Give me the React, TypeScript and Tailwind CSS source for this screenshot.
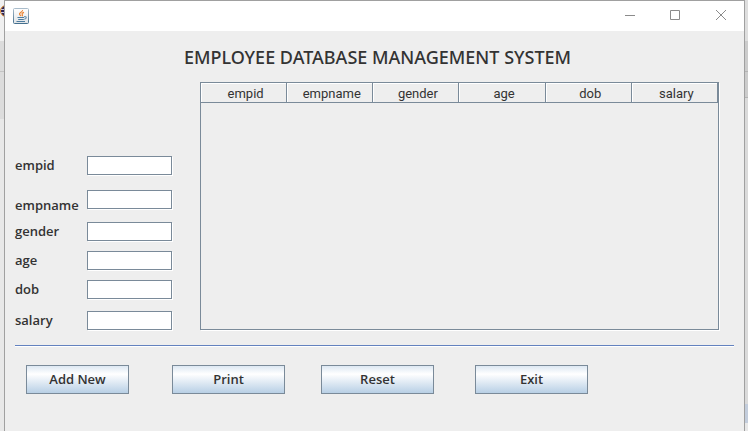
import React from "react";

const fields = [
  { name: "empid", row: "h-[34px]", label: "" },
  { name: "empname", row: "h-8", label: "pt-1.5" },
  { name: "gender", row: "h-[29px]", label: "" },
  { name: "age", row: "h-[29px]", label: "" },
  { name: "dob", row: "h-[31px]", label: "" },
  { name: "salary", row: "h-5", label: "" },
];

const columns = ["empid", "empname", "gender", "age", "dob", "salary"];

function JavaIcon() {
  return (
    <svg width="16" height="16" viewBox="0 0 16 16" aria-hidden="true">
      <defs>
        <linearGradient id="frame" x1="0" y1="0" x2="0" y2="1">
          <stop offset="0" stopColor="#a9bccb" />
          <stop offset="1" stopColor="#45708f" />
        </linearGradient>
        <linearGradient id="face" x1="0" y1="0" x2="0" y2="1">
          <stop offset="0" stopColor="#ffffff" />
          <stop offset="1" stopColor="#dfe3e6" />
        </linearGradient>
      </defs>
      <rect x="0.5" y="0.5" width="15" height="15" rx="1" fill="url(#face)" stroke="url(#frame)" />
      <path
        d="M9.6 2C10 3.8 6.2 4.4 6.5 6C6.7 7 7.6 7.2 7.8 8.2M11 4.4C9.2 5 8.6 5.6 9.3 6.5C9.8 7.2 9.4 7.8 8.9 8.2"
        fill="none"
        stroke="#ea8331"
        strokeWidth="1.2"
      />
      <path d="M4.5 9.5H11M5.2 11.5H10.8M3.5 13.5H12" fill="none" stroke="#4d7c9f" />
      <path d="M11 8.7C14.2 8 13.8 10.8 11.2 11.2" fill="none" stroke="#6a93b1" strokeWidth="1.1" />
    </svg>
  );
}

function TitleBar() {
  return (
    <header className="flex h-[30px] items-center justify-between bg-white pr-[17px] pl-2">
      <JavaIcon />
      <div className="flex text-[#8b8b8b]">
        <button type="button" aria-label="Minimize" className="mr-[33px]">
          <svg width="12" height="12" viewBox="0 0 12 12"><path d="M1 5.5H11" stroke="currentColor" /></svg>
        </button>
        <button type="button" aria-label="Maximize" className="mr-[34px]">
          <svg width="12" height="12" viewBox="0 0 12 12"><path d="M1.5 0.5H10.5V9.5H1.5Z" fill="none" stroke="currentColor" /></svg>
        </button>
        <button type="button" aria-label="Close">
          <svg width="12" height="12" viewBox="0 0 12 12"><path d="M1 0L11 10M11 0L1 10" stroke="currentColor" /></svg>
        </button>
      </div>
    </header>
  );
}

function ActionButton({ label, width }: { label: string; width: string }) {
  return (
    <button
      type="button"
      className={`${width} h-[29px] border border-[#7a8a99] bg-linear-to-b from-[#dde8f3] via-white via-30% to-[#b8cfe5] pb-0.5 text-[13px] leading-5 font-semibold`}
    >
      {label}
    </button>
  );
}

export default function App() {
  return (
    <div className="flex min-h-screen bg-[#e8e8e8] font-['Open_Sans','Noto_Sans',sans-serif] text-[#333333]">
      <aside className="w-1 shrink-0 overflow-hidden" aria-hidden="true">
        <div className="h-[41px] bg-[#f0f0f0] pt-[5px]">
          <svg width="4" height="13" viewBox="0 0 4 13">
            <circle cx="6" cy="6" r="5.5" fill="#2c2255" stroke="#e8932f" />
            <path d="M1 4.5H4M1 7.5H4" stroke="#c9c6dd" />
          </svg>
        </div>
        <div className="h-[31px] border-b border-[#c4c4c4] bg-[#dcdcdc]" />
        <div className="h-[47px] bg-[#dcdcdc]" />
      </aside>
      <div className="flex min-w-0 flex-1 flex-col border-x border-t border-[#a0a0a0] bg-[#eeeeee]">
        <TitleBar />
        <main className="px-[10px]">
          <h1 className="pt-3.5 pl-1.5 text-center font-['Noto_Sans',sans-serif] text-[18px] leading-6 font-medium">
            EMPLOYEE DATABASE MANAGEMENT SYSTEM
          </h1>
          <div className="mt-[13px] flex pr-[15px]">
            <form className="w-[185px] shrink-0 pt-[74px]">
              {fields.map((f) => (
                <div key={f.name} className={`flex items-start ${f.row}`}>
                  <label htmlFor={f.name} className={`w-[72px] text-[13px] leading-[18px] font-semibold ${f.label}`}>
                    {f.name}
                  </label>
                  <input
                    id={f.name}
                    type="text"
                    className="h-[19px] w-[85px] border border-[#7a8a99] bg-white px-1 text-xs shadow-[1px_1px_0_#ffffff] outline-none"
                  />
                </div>
              ))}
            </form>
            <div className="h-[248px] min-w-0 flex-1 border border-[#7a8a99] shadow-[1px_1px_0_#ffffff]">
              <table className="w-full table-fixed border-separate border-spacing-0 font-['Roboto',sans-serif] text-[13px]">
                <thead>
                  <tr>
                    {columns.map((c) => (
                      <th
                        key={c}
                        scope="col"
                        className="h-5 border-r border-b border-[#7a8a99] p-0 pt-0.5 pl-1 leading-[17px] font-normal shadow-[inset_1px_1px_0_#ffffff]"
                      >
                        {c}
                      </th>
                    ))}
                  </tr>
                </thead>
              </table>
            </div>
          </div>
          <hr className="mt-3.5 h-0.5 border-t border-b border-t-[#6382bf] border-b-white" />
          <div className="flex pt-[18px] pl-[11px]">
            <ActionButton label="Add New" width="w-[103px]" />
            <div className="flex pl-[43px]">
              <ActionButton label="Print" width="w-[113px]" />
            </div>
            <div className="flex pl-9">
              <ActionButton label="Reset" width="w-[113px]" />
            </div>
            <div className="flex pl-[41px]">
              <ActionButton label="Exit" width="w-[113px]" />
            </div>
          </div>
        </main>
      </div>
      <aside className="w-[3px] shrink-0" aria-hidden="true">
        <div className="h-[41px] bg-[#dedede]" />
        <div className="h-[31px] border-b border-[#b4b4b4] bg-[#cccccc]" />
        <div className="h-[26px] border-b border-[#b4b4b4] bg-[#cccccc]" />
        <div className="h-[306px] bg-[#dadada]" />
        <div className="h-[19px] bg-[#c3cddc]" />
      </aside>
    </div>
  );
}
